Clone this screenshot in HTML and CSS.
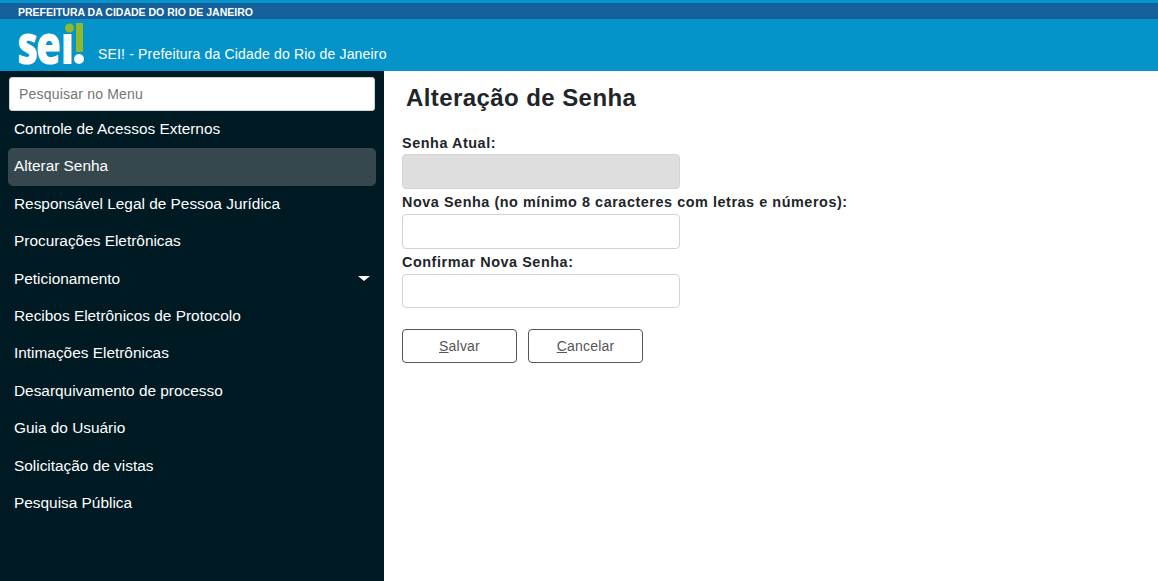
FILE: index.html
```html
<!DOCTYPE html>
<html lang="pt-BR">
<head>
<meta charset="utf-8">
<title>SEI! - Alteração de Senha</title>
<link rel="stylesheet" href="styles.css">
</head>
<body>
<header class="header">
  <div class="gov-bar">PREFEITURA DA CIDADE DO RIO DE JANEIRO</div>
  <div class="brand">
    <svg class="logo" width="68" height="50" viewBox="0 0 68 50" aria-label="sei!">
      <text class="logo-text" transform="scale(0.75 1)" x="-1 24 57" y="45">sei</text>
      <rect class="logo-bg" x="44" y="0" width="13" height="15"/>
      <circle class="logo-green" cx="51.5" cy="9" r="4.5"/>
      <rect class="logo-green" x="58" y="4" width="7" height="29"/>
      <circle class="logo-white" cx="61" cy="40" r="5"/>
    </svg>
    <span class="brand-title">SEI! - Prefeitura da Cidade do Rio de Janeiro</span>
  </div>
</header>
<div class="layout">
  <nav class="sidebar">
    <input class="search" type="text" placeholder="Pesquisar no Menu">
    <ul class="menu">
      <li class="menu-item">Controle de Acessos Externos</li>
      <li class="menu-item active">Alterar Senha</li>
      <li class="menu-item">Responsável Legal de Pessoa Jurídica</li>
      <li class="menu-item">Procurações Eletrônicas</li>
      <li class="menu-item">Peticionamento<span class="caret"></span></li>
      <li class="menu-item">Recibos Eletrônicos de Protocolo</li>
      <li class="menu-item">Intimações Eletrônicas</li>
      <li class="menu-item">Desarquivamento de processo</li>
      <li class="menu-item">Guia do Usuário</li>
      <li class="menu-item">Solicitação de vistas</li>
      <li class="menu-item">Pesquisa Pública</li>
    </ul>
  </nav>
  <main class="content">
    <h1 class="title">Alteração de Senha</h1>
    <form class="form">
      <label class="label first">Senha Atual:</label>
      <input class="field disabled" type="password" disabled>
      <label class="label">Nova Senha (no mínimo 8 caracteres com letras e números):</label>
      <input class="field" type="password">
      <label class="label">Confirmar Nova Senha:</label>
      <input class="field last" type="password">
      <div class="actions">
        <button class="btn" type="button"><u>S</u>alvar</button>
        <button class="btn" type="button"><u>C</u>ancelar</button>
      </div>
    </form>
  </main>
</div>
</body>
</html>
```
FILE: styles.css
```css
* { box-sizing: border-box; }
html, body { margin: 0; height: 100%; overflow: hidden; }
body { font-family: "Liberation Sans", Arial, sans-serif; background: #fff; color: #212529; }

.header { height: 71px; background: #0494c9; padding-top: 3px; }
.gov-bar {
  height: 16px; background: #155f9b; color: #fff; padding-left: 18px;
  font-size: 10.5px; font-weight: 700; line-height: 18px;
}
.brand { display: flex; height: 52px; padding-left: 18px; }
.logo { flex: none; display: block; overflow: visible; }
.logo-text { font-family: "Open Sans", sans-serif; font-weight: 800; font-size: 54px; fill: #fff; }
.logo-bg { fill: #0494c9; }
.logo-green { fill: #8fb82a; }
.logo-white { fill: #fff; }
.brand-title { margin-left: 12px; margin-top: 27px; font-size: 14px; line-height: 16px; color: #fff; letter-spacing: 0.17px; }

.layout { display: flex; height: 510px; }
.sidebar { width: 384px; flex: none; background: #001a23; padding: 6px 8px 0 8px; }
.search {
  display: block; width: 366px; height: 34px; margin-left: 1px; padding: 0 9px;
  border: 1px solid #ced4da; border-radius: 3px; background: #fff;
  font: 14px "Liberation Sans", Arial, sans-serif; letter-spacing: 0.2px; outline: none;
}
.search::placeholder { color: #757575; opacity: 1; }
.menu { list-style: none; margin: 0; padding: 0; }
.menu-item {
  position: relative; height: 37.4px; padding-left: 6px; border-radius: 5px;
  color: #fff; font-size: 15.4px; line-height: 36.4px;
}
.active { background: #36484e; }
.caret {
  position: absolute; right: 6px; top: 15.5px; width: 0; height: 0;
  border-left: 6px solid transparent; border-right: 6px solid transparent; border-top: 5px solid #fff;
}

.content { flex: 1; padding: 11px 18px 0 18px; }
.title { margin: 0 0 0 4px; font-size: 24px; line-height: 31px; font-weight: 700; color: #212529; letter-spacing: 0.42px; }
.form { display: flex; flex-direction: column; align-items: flex-start; }
.label { font-size: 14.4px; font-weight: 700; line-height: 16px; height: 25.5px; padding-top: 5px; color: #212529; letter-spacing: 0.55px; }
.label.first { margin-top: 18px; height: 23px; padding-top: 4px; }
.field {
  display: block; width: 278px; height: 34.5px; border: 1px solid #ced4da; border-radius: 4px;
  background: #fff; padding: 0 8px; outline: none;
}
.field.disabled { background: #dedede; }
.field.last { height: 34px; }
.actions { display: flex; gap: 11px; margin-top: 21px; }
.btn {
  width: 115px; height: 34px; border: 1px solid #555; border-radius: 4px; background: #fff;
  color: #555; font: 14px "Liberation Sans", Arial, sans-serif; letter-spacing: 0.2px; padding: 0;
}
```
